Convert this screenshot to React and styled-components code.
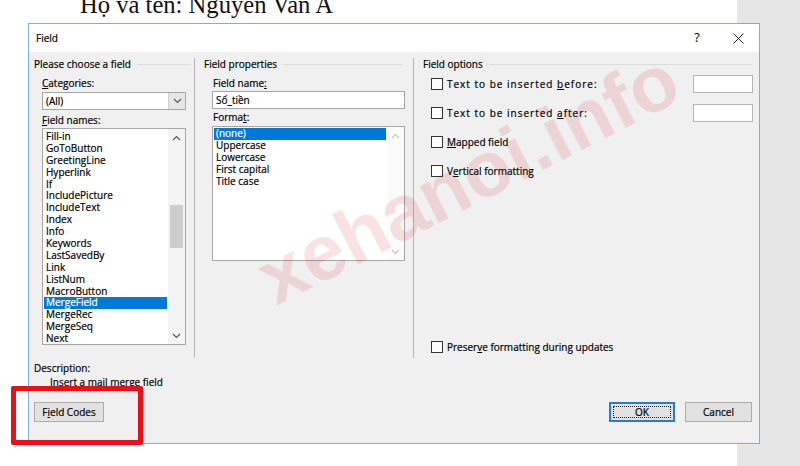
import React from 'react'
import styled, { createGlobalStyle } from 'styled-components'

const GlobalStyle = createGlobalStyle`
  html, body {
    margin: 0;
    padding: 0;
    width: 800px;
    height: 466px;
    overflow: hidden;
    background: #fff;
  }
`

const UI_FONT = `'Open Sans', 'Noto Sans', sans-serif`

const Screen = styled.div`
  position: relative;
  width: 800px;
  height: 466px;
  display: grid;
  grid-template-columns: 737px 1fr;
  overflow: hidden;
`

const DocPage = styled.div`
  background: #ffffff;
`

const DocLine = styled.div`
  margin-top: -7px;
  padding-left: 80px;
  font-family: 'Liberation Serif', 'Times New Roman', serif;
  font-size: 24.6px;
  line-height: 24px;
  color: #111;
  white-space: nowrap;
`

const Gutter = styled.div`
  background: #e6e6e6;
`

const Dialog = styled.div`
  position: absolute;
  left: 28px;
  top: 23px;
  width: 732px;
  height: 421px;
  box-sizing: border-box;
  border: 1px solid #83acdc;
  display: flex;
  flex-direction: column;
  font-family: ${UI_FONT};
  font-size: 10px;
  line-height: 12px;
  color: #000;
  -webkit-text-stroke: 0.2px #000;
`

const TitleBar = styled.div`
  height: 28px;
  background: #fff;
  display: flex;
  align-items: center;
  padding-left: 7px;
`

const TitleText = styled.div`
  flex: 1;
`

const TitleButton = styled.div`
  width: ${(p) => p.$w}px;
  height: 28px;
  display: flex;
  align-items: center;
  justify-content: center;
  font-size: 12px;
  color: #222;
`

const DialogBody = styled.div`
  flex: 1;
  background: #f0f0f0;
  padding: 6px 6px 21px 5px;
  display: flex;
  flex-direction: column;
`

const Panels = styled.div`
  display: flex;
  height: 300px;
`

const Group = styled.div`
  box-sizing: border-box;
  width: ${(p) => (p.$w ? `${p.$w}px` : 'auto')};
  flex: ${(p) => (p.$w ? 'none' : '1')};
  padding: 0 ${(p) => p.$pr}px 0 ${(p) => p.$pl}px;
  border-right: ${(p) => (p.$last ? 'none' : '1px solid #b9b9b9')};
  display: flex;
  flex-direction: column;
`

const GroupHeader = styled.div`
  display: flex;
  align-items: center;
  height: 12px;
  margin-right: ${(p) => p.$rule}px;
`

const Rule = styled.div`
  flex: 1;
  height: 1px;
  background: #dcdcdc;
  margin-left: 6px;
`

const Indent = styled.div`
  padding-left: 8px;
  display: flex;
  flex-direction: column;
`

const FieldLabel = styled.div`
  margin-top: ${(p) => p.$mt}px;
  margin-bottom: ${(p) => p.$mb}px;
  margin-left: ${(p) => p.$ml || 0}px;
  height: 12px;
`

const Key = styled.span`
  text-decoration: underline;
  text-underline-offset: 1px;
`

const ComboBox = styled.div`
  box-sizing: border-box;
  width: 144px;
  height: 18px;
  border: 1px solid #a6a6a6;
  background: #fff;
  display: flex;
  align-items: center;
`

const ComboValue = styled.div`
  flex: 1;
  padding-left: 3px;
`

const DropButton = styled.div`
  box-sizing: border-box;
  width: 17px;
  height: 16px;
  background: #e6e6e6;
  border-left: 1px solid #d0d0d0;
  display: flex;
  align-items: center;
  justify-content: center;
`

const TextField = styled.div`
  box-sizing: border-box;
  width: ${(p) => p.$w}px;
  height: 18px;
  border: 1px solid #a6a6a6;
  background: #fff;
  padding-left: 3px;
  display: flex;
  align-items: center;
`

const ListBox = styled.div`
  box-sizing: border-box;
  width: ${(p) => p.$w}px;
  height: ${(p) => p.$h}px;
  border: 1px solid #a6a6a6;
  background: #fff;
  display: flex;
  overflow: hidden;
`

const ListItems = styled.div`
  flex: 1;
  padding: ${(p) => p.$pt}px 1px 1px 1px;
  display: flex;
  flex-direction: column;
`

const ListItem = styled.div`
  height: 11.9px;
  line-height: 11.9px;
  padding-left: 2px;
  white-space: nowrap;
  background: ${(p) => (p.$selected ? '#0078d7' : 'transparent')};
  color: ${(p) => (p.$selected ? '#fff' : '#000')};
  -webkit-text-stroke-color: ${(p) => (p.$selected ? '#fff' : '#000')};
`

const ScrollBar = styled.div`
  width: 17px;
  background: ${(p) => (p.$disabled ? '#fbfbfb' : '#f4f4f4')};
  display: flex;
  flex-direction: column;
  align-items: center;
`

const ScrollArrow = styled.div`
  height: 17px;
  width: 17px;
  display: flex;
  align-items: center;
  justify-content: center;
`

const ScrollTrack = styled.div`
  flex: 1;
  width: 13px;
  display: flex;
  flex-direction: column;
`

const ScrollThumb = styled.div`
  margin-top: ${(p) => p.$top}px;
  height: ${(p) => p.$h}px;
  background: #cdcdcd;
`

const OptionRow = styled.div`
  display: flex;
  align-items: center;
  height: 18px;
  margin-top: ${(p) => p.$mt}px;
  padding-left: 8px;
`

const CheckBox = styled.div`
  box-sizing: border-box;
  width: 12px;
  height: 12px;
  border: 1px solid #333;
  background: #fcfcfc;
  margin-right: 4px;
`

const OptionText = styled.div`
  flex: 1;
  letter-spacing: ${(p) => (p.$spaced ? '1px' : 'normal')};
`

const SmallInput = styled.div`
  box-sizing: border-box;
  width: 60px;
  height: 18px;
  border: 1px solid #b4b4b4;
  background: #fff;
`

const PreserveRow = styled(OptionRow)`
  margin-top: auto;
  margin-bottom: 2px;
`

const DescTitle = styled.div`
  margin-top: 4px;
  height: 12px;
`

const DescText = styled.div`
  margin-top: 2px;
  padding-left: 16px;
  height: 12px;
`

const ButtonRow = styled.div`
  margin-top: auto;
  display: flex;
  align-items: center;
  gap: 10px;
  padding-right: 1px;
`

const Button = styled.div`
  box-sizing: border-box;
  width: ${(p) => p.$w}px;
  height: 20px;
  background: #e1e1e1;
  border: ${(p) => (p.$default ? '2px solid #2a7ad0' : '1px solid #adadad')};
  display: flex;
  align-items: center;
  justify-content: center;
  margin-left: ${(p) => (p.$push ? 'auto' : '0')};
`

const FocusRing = styled.div`
  box-sizing: border-box;
  width: calc(100% - 4px);
  height: calc(100% - 4px);
  border: 1px dotted #222;
  display: flex;
  align-items: center;
  justify-content: center;
`

const Watermark = styled.div`
  position: absolute;
  left: 468px;
  top: 178px;
  transform: translate(-50%, -50%) rotate(-27deg);
  font-family: 'Liberation Sans', Arial, sans-serif;
  font-weight: bold;
  font-size: 78px;
  line-height: 1;
  color: rgba(225, 20, 20, 0.12);
  white-space: nowrap;
  pointer-events: none;
`

const Annotation = styled.div`
  position: absolute;
  left: 11px;
  top: 386px;
  width: 132px;
  height: 59px;
  box-sizing: border-box;
  border: 5px solid #e8101a;
  border-radius: 2px;
  pointer-events: none;
`

const Chevron = ({ up, color = '#555' }) => (
  <svg width="9" height="6" viewBox="0 0 9 6">
    <polyline
      points={up ? '1,5 4.5,1.5 8,5' : '1,1 4.5,4.5 8,1'}
      fill="none"
      stroke={color}
      strokeWidth="1.1"
    />
  </svg>
)

const CloseIcon = () => (
  <svg width="11" height="11" viewBox="0 0 11 11">
    <path d="M0.5 0.5 L10.5 10.5 M10.5 0.5 L0.5 10.5" stroke="#222" strokeWidth="1" />
  </svg>
)

const fieldNames = [
  'Fill-in',
  'GoToButton',
  'GreetingLine',
  'Hyperlink',
  'If',
  'IncludePicture',
  'IncludeText',
  'Index',
  'Info',
  'Keywords',
  'LastSavedBy',
  'Link',
  'ListNum',
  'MacroButton',
  'MergeField',
  'MergeRec',
  'MergeSeq',
  'Next',
]

const formats = ['(none)', 'Uppercase', 'Lowercase', 'First capital', 'Title case']

const App = () => {
  return (
    <>
      <GlobalStyle />
      <Screen>
        <DocPage>
          <DocLine>Họ va ten: Nguyen Van A</DocLine>
        </DocPage>
        <Gutter />

        <Dialog>
          <TitleBar>
            <TitleText>Field</TitleText>
            <TitleButton $w={40}>?</TitleButton>
            <TitleButton $w={42}>
              <CloseIcon />
            </TitleButton>
          </TitleBar>

          <DialogBody>
            <Panels>
              <Group $w={161} $pl={0} $pr={8}>
                <GroupHeader $rule={-4}>
                  Please choose a field
                  <Rule />
                </GroupHeader>
                <Indent>
                  <FieldLabel $mt={7} $mb={3}>
                    <Key>C</Key>ategories:
                  </FieldLabel>
                  <ComboBox>
                    <ComboValue>(All)</ComboValue>
                    <DropButton>
                      <Chevron />
                    </DropButton>
                  </ComboBox>
                  <FieldLabel $mt={4} $mb={2}>
                    <Key>F</Key>ield names:
                  </FieldLabel>
                  <ListBox $w={144} $h={217}>
                    <ListItems $pt={2}>
                      {fieldNames.map((name) => (
                        <ListItem key={name} $selected={name === 'MergeField'}>
                          {name}
                        </ListItem>
                      ))}
                    </ListItems>
                    <ScrollBar>
                      <ScrollArrow>
                        <Chevron up />
                      </ScrollArrow>
                      <ScrollTrack>
                        <ScrollThumb $top={59} $h={43} />
                      </ScrollTrack>
                      <ScrollArrow>
                        <Chevron />
                      </ScrollArrow>
                    </ScrollBar>
                  </ListBox>
                </Indent>
              </Group>

              <Group $w={219} $pl={9} $pr={8}>
                <GroupHeader $rule={2}>
                  Field properties
                  <Rule />
                </GroupHeader>
                <Indent>
                  <FieldLabel $mt={7} $mb={2} $ml={1}>
                    Field name<Key>:</Key>
                  </FieldLabel>
                  <TextField $w={193}>Số_tiền</TextField>
                  <FieldLabel $mt={2} $mb={3} $ml={1}>
                    Forma<Key>t</Key>:
                  </FieldLabel>
                  <ListBox $w={193} $h={135}>
                    <ListItems $pt={1}>
                      {formats.map((f) => (
                        <ListItem key={f} $selected={f === '(none)'}>
                          {f}
                        </ListItem>
                      ))}
                    </ListItems>
                    <ScrollBar $disabled>
                      <ScrollArrow>
                        <Chevron up color="#c4c4c4" />
                      </ScrollArrow>
                      <ScrollTrack />
                      <ScrollArrow>
                        <Chevron color="#c4c4c4" />
                      </ScrollArrow>
                    </ScrollBar>
                  </ListBox>
                </Indent>
              </Group>

              <Group $pl={9} $pr={0} $last>
                <GroupHeader $rule={1}>
                  Field options
                  <Rule />
                </GroupHeader>
                <OptionRow $mt={5}>
                  <CheckBox />
                  <OptionText $spaced>
                    Text to be inserted <Key>b</Key>efore:
                  </OptionText>
                  <SmallInput />
                </OptionRow>
                <OptionRow $mt={11}>
                  <CheckBox />
                  <OptionText $spaced>
                    Text to be inserted <Key>a</Key>fter:
                  </OptionText>
                  <SmallInput />
                </OptionRow>
                <OptionRow $mt={11}>
                  <CheckBox />
                  <OptionText>
                    <Key>M</Key>apped field
                  </OptionText>
                </OptionRow>
                <OptionRow $mt={11}>
                  <CheckBox />
                  <OptionText>
                    V<Key>e</Key>rtical formatting
                  </OptionText>
                </OptionRow>
                <PreserveRow>
                  <CheckBox />
                  <OptionText>
                    Preser<Key>v</Key>e formatting during updates
                  </OptionText>
                </PreserveRow>
              </Group>
            </Panels>

            <DescTitle>Description:</DescTitle>
            <DescText>Insert a mail merge field</DescText>

            <ButtonRow>
              <Button $w={70}>
                F<Key>i</Key>eld Codes
              </Button>
              <Button $w={66} $default $push>
                <FocusRing>OK</FocusRing>
              </Button>
              <Button $w={67}>Cancel</Button>
            </ButtonRow>
          </DialogBody>
        </Dialog>

        <Watermark>xehanoi.info</Watermark>
        <Annotation />
      </Screen>
    </>
  )
}

export default App
